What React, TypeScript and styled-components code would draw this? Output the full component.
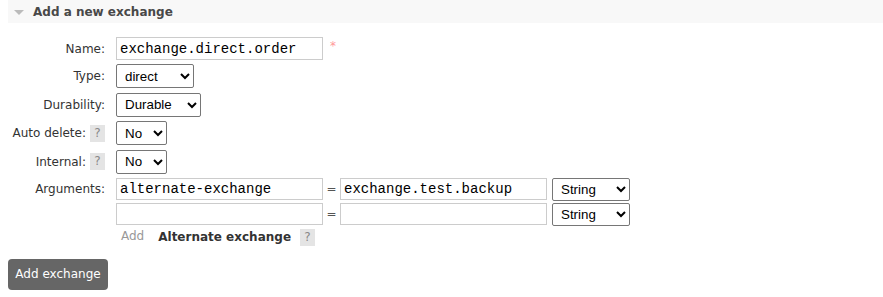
import React from "react";
import styled, { createGlobalStyle } from "styled-components";

const Global = createGlobalStyle`
  html, body { margin: 0; padding: 0; background: #fff; }
  body { font-family: "DejaVu Sans", Verdana, sans-serif; font-size: 12px; color: #484848; }
`;

const Section = styled.div`
  padding-left: 8px;
`;

const Header = styled.div`
  height: 23px;
  background: #f8f8f8;
  display: flex;
  align-items: center;
  gap: 9px;
  padding-left: 6px;
  font-weight: bold;
  font-size: 12px;
  color: #484848;
`;

const Triangle = styled.span`
  width: 0;
  height: 0;
  border-left: 5.5px solid transparent;
  border-right: 5.5px solid transparent;
  border-top: 5px solid #bbb;
  margin-top: 1px;
`;

const Form = styled.div`
  display: grid;
  grid-template-columns: 97px auto;
  column-gap: 11px;
  row-gap: 4.4px;
  align-items: center;
  padding-top: 14px;
  justify-content: start;
`;

const Label = styled.div<{ $top?: boolean }>`
  display: flex;
  justify-content: flex-end;
  align-items: center;
  gap: 4px;
  color: #333;
  white-space: nowrap;
  align-self: ${(p) => (p.$top ? "start" : "center")};
  margin-top: ${(p) => (p.$top ? "4px" : "0")};
`;

const Help = styled.span`
  display: inline-block;
  width: 15px;
  height: 17px;
  line-height: 17px;
  text-align: center;
  background: #e4e4e4;
  color: #888;
  font-size: 12px;
`;

const Field = styled.div`
  display: flex;
  align-items: center;
`;

const TextInput = styled.input<{ $h?: number }>`
  box-sizing: border-box;
  width: 207px;
  height: ${(p) => p.$h ?? 23}px;
  border: 1px solid #ccc;
  padding: 0 3px;
  font-family: "Liberation Mono", "Courier New", monospace;
  font-size: 14px;
  color: #000;
  outline: none;
`;

const Select = styled.select<{ $w: number }>`
  box-sizing: border-box;
  width: ${(p) => p.$w}px;
  height: 24px;
  border: 1px solid #767676;
  border-radius: 2px;
  background: #fff;
  font-family: "Liberation Sans", Arial, sans-serif;
  font-size: 13.33px;
  color: #000;
  padding: 0 2px 0 4px;
`;

const Required = styled.span`
  color: #f99;
  font-size: 12px;
  margin-left: 7px;
  align-self: flex-start;
  margin-top: 2px;
`;

const Eq = styled.span`
  width: 17px;
  text-align: center;
  color: #555;
  font-size: 12px;
`;

const ArgsBlock = styled.div`
  display: flex;
  flex-direction: column;
  gap: 2px;
`;

const ArgRow = styled.div`
  display: flex;
  align-items: center;
`;

const TypeSelect = styled(Select)`
  margin-left: 5px;
  height: 23px;
`;

const AddRow = styled.div`
  display: flex;
  align-items: center;
  margin-top: 1px;
  padding-left: 5px;
`;

const AddLink = styled.span`
  color: #999;
  margin-right: 14px;
  margin-top: -3px;
`;

const AltLabel = styled.span`
  font-weight: bold;
  color: #333;
  margin-right: 9px;
`;

const Button = styled.button`
  margin-top: 13px;
  width: 100px;
  height: 31px;
  background: #666;
  color: #fff;
  border: none;
  border-radius: 4px;
  font-family: "DejaVu Sans", Verdana, sans-serif;
  font-size: 12px;
  padding: 0;
`;

const argTypes = ["String", "Number", "Boolean", "List"];

export default function App() {
  return (
    <>
      <Global />
      <Section>
        <Header>
          <Triangle />
          <span>Add a new exchange</span>
        </Header>
        <Form>
          <Label>Name:</Label>
          <Field>
            <TextInput defaultValue="exchange.direct.order" />
            <Required>*</Required>
          </Field>

          <Label>Type:</Label>
          <Field>
            <Select $w={78} defaultValue="direct">
              <option>direct</option>
              <option>fanout</option>
              <option>headers</option>
              <option>topic</option>
            </Select>
          </Field>

          <Label>Durability:</Label>
          <Field>
            <Select $w={85} defaultValue="Durable">
              <option>Durable</option>
              <option>Transient</option>
            </Select>
          </Field>

          <Label>
            Auto delete: <Help>?</Help>
          </Label>
          <Field>
            <Select $w={51} defaultValue="No">
              <option>No</option>
              <option>Yes</option>
            </Select>
          </Field>

          <Label>
            Internal: <Help>?</Help>
          </Label>
          <Field>
            <Select $w={51} defaultValue="No">
              <option>No</option>
              <option>Yes</option>
            </Select>
          </Field>

          <Label $top>Arguments:</Label>
          <ArgsBlock>
            <ArgRow>
              <TextInput $h={22} defaultValue="alternate-exchange" />
              <Eq>=</Eq>
              <TextInput $h={22} defaultValue="exchange.test.backup" />
              <TypeSelect $w={78} defaultValue="String">
                {argTypes.map((t) => (
                  <option key={t}>{t}</option>
                ))}
              </TypeSelect>
            </ArgRow>
            <ArgRow>
              <TextInput $h={22} defaultValue="" />
              <Eq>=</Eq>
              <TextInput $h={22} defaultValue="" />
              <TypeSelect $w={78} defaultValue="String">
                {argTypes.map((t) => (
                  <option key={t}>{t}</option>
                ))}
              </TypeSelect>
            </ArgRow>
            <AddRow>
              <AddLink>Add</AddLink>
              <AltLabel>Alternate exchange</AltLabel>
              <Help>?</Help>
            </AddRow>
          </ArgsBlock>
        </Form>
        <Button>Add exchange</Button>
      </Section>
    </>
  );
}
